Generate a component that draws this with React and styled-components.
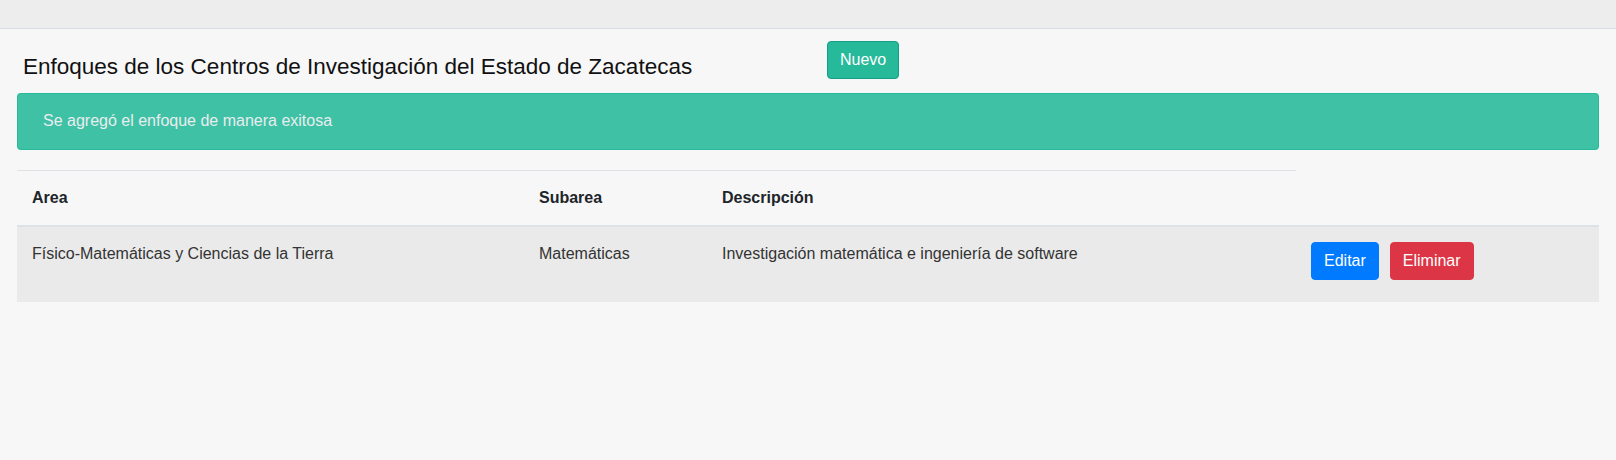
import React from "react";
import styled, { createGlobalStyle } from "styled-components";

const GlobalStyle = createGlobalStyle`
  html, body {
    margin: 0;
    padding: 0;
    background: #f7f7f7;
  }
  body {
    font-family: "Liberation Sans", Arial, sans-serif;
    font-size: 16px;
    line-height: 1.5;
    color: #212529;
  }
  * { box-sizing: border-box; }
`;

const Page = styled.div`
  min-height: 460px;
  background: #f7f7f7;
`;

const TopBar = styled.div`
  height: 29px;
  background: #ededed;
  border-bottom: 1px solid #d9dee4;
`;

const Main = styled.main`
  padding: 0 17px;
`;

const HeaderRow = styled.div`
  display: grid;
  grid-template-columns: 810px auto;
  align-items: start;
  padding-top: 12px;
`;

const Title = styled.h4`
  margin: 12px 0 0;
  padding-left: 6px;
  font-size: 22.5px;
  font-weight: 400;
  line-height: 1.2;
  color: #111;
`;

const Button = styled.button`
  display: inline-block;
  font-family: inherit;
  font-size: 16px;
  line-height: 24px;
  padding: 6px 12px;
  border-radius: 4px;
  border: 1px solid ${(p) => p.$border};
  background: ${(p) => p.$bg};
  color: #fff;
  cursor: pointer;
  justify-self: start;
`;

const Alert = styled.div`
  margin: 13px 0 20px;
  padding: 15px 25px 16px;
  border: 1px solid rgba(38, 185, 154, 0.88);
  background: rgba(38, 185, 154, 0.88);
  border-radius: 4px;
  color: #e9edef;
  font-size: 16px;
  line-height: 24px;
`;

const Table = styled.table`
  width: 100%;
  border-collapse: collapse;
  table-layout: fixed;
`;

const Th = styled.th`
  text-align: left;
  font-weight: 700;
  padding: 15px;
  line-height: 24px;
  color: #212529;
  border-top: 1px solid #dee2e6;
  border-bottom: 2px solid #dee2e6;
  vertical-align: bottom;
`;

const BodyRow = styled.tr`
  background: #eaeaea;
`;

const Td = styled.td`
  padding: 15px;
  line-height: 24px;
  color: #333;
  vertical-align: top;
  border-top: 2px solid #dee2e6;
`;

const Actions = styled.div`
  display: flex;
  gap: 11px;
  margin-bottom: 7px;
`;

const rows = [
  {
    area: "Físico-Matemáticas y Ciencias de la Tierra",
    subarea: "Matemáticas",
    descripcion: "Investigación matemática e ingeniería de software",
  },
];

export default function App() {
  return (
    <Page>
      <GlobalStyle />
      <TopBar />
      <Main>
        <HeaderRow>
          <Title>Enfoques de los Centros de Investigación del Estado de Zacatecas</Title>
          <Button $bg="#26b99a" $border="#169f85">Nuevo</Button>
        </HeaderRow>
        <Alert>Se agregó el enfoque de manera exitosa</Alert>
        <Table>
          <colgroup>
            <col style={{ width: "507px" }} />
            <col style={{ width: "183px" }} />
            <col style={{ width: "589px" }} />
            <col />
          </colgroup>
          <thead>
            <tr>
              <Th>Area</Th>
              <Th>Subarea</Th>
              <Th>Descripción</Th>
            </tr>
          </thead>
          <tbody>
            {rows.map((r) => (
              <BodyRow key={r.area}>
                <Td>{r.area}</Td>
                <Td>{r.subarea}</Td>
                <Td>{r.descripcion}</Td>
                <Td>
                  <Actions>
                    <Button $bg="#007bff" $border="#007bff">Editar</Button>
                    <Button $bg="#dc3545" $border="#dc3545">Eliminar</Button>
                  </Actions>
                </Td>
              </BodyRow>
            ))}
          </tbody>
        </Table>
      </Main>
    </Page>
  );
}
